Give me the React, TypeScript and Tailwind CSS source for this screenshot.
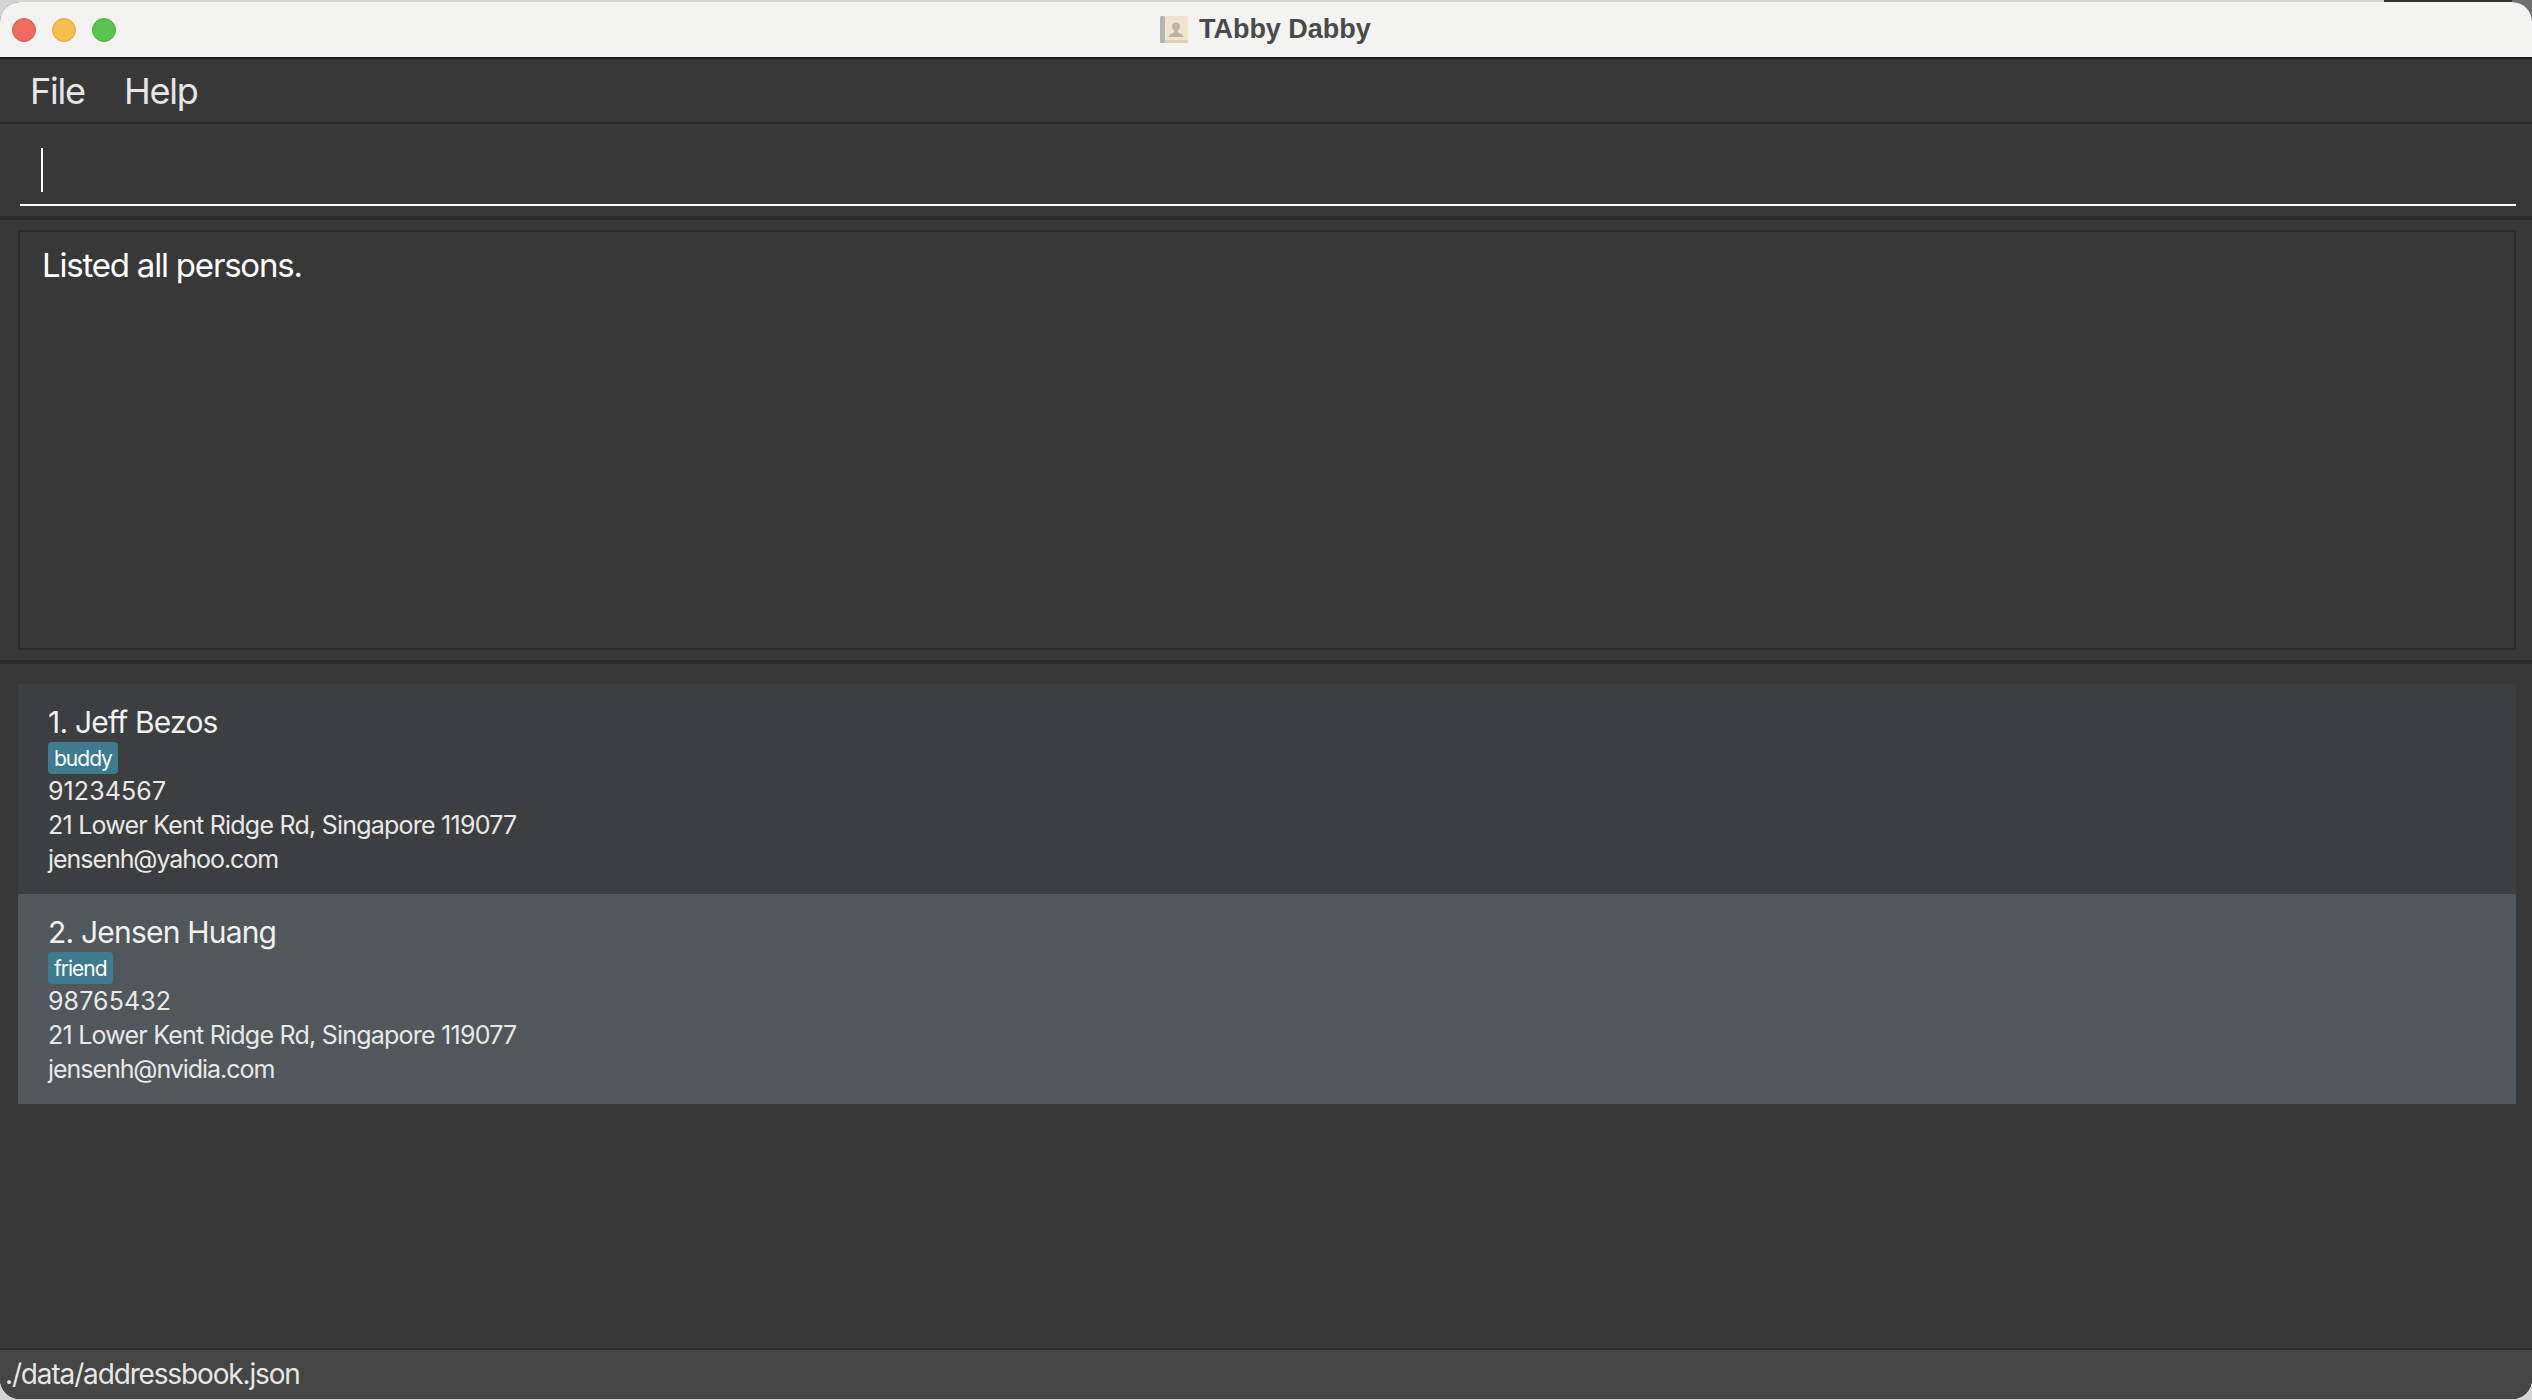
import React from "react";

const font = { fontFamily: "Inter, 'Noto Sans', sans-serif" };

function Person({ name, tag, phone, email, selected }: { name: string; tag: string; phone: string; email: string; selected?: boolean }) {
  return (
    <div className={`h-[210px] pl-[30px] pt-[15px] flex flex-col items-start text-[#e8e8e8] ${selected ? "bg-[#51575a]" : "bg-[#3d3e40]"}`}>
      <div className="text-[30px] leading-[47px] tracking-[-0.8px] h-[43px] text-[#f0f0f0]">{name}</div>
      <div className="h-[32px] px-[6px] rounded-[4px] bg-[#3e7b91] text-[21px] leading-[33px] tracking-[-1px] text-white">{tag}</div>
      <div className="text-[25px] leading-[34px] h-[34px] tracking-[0.1px]">{phone}</div>
      <div className="text-[25px] leading-[34px] h-[34px] tracking-[-0.77px]">21 Lower Kent Ridge Rd, Singapore 119077</div>
      <div className="text-[25px] leading-[34px] h-[34px] tracking-[-1.05px]">{email}</div>
    </div>
  );
}

export default function App() {
  return (
    <div className="relative w-[2532px] h-[1400px] overflow-hidden bg-[#d4d4d4]" style={font}>
      <div className="absolute right-0 top-0 w-[148px] h-[2px] bg-[#333333]" />
      <div className="absolute right-0 top-0 w-[20px] h-[20px] bg-[#707070]" />
      <div className="absolute left-0 top-0 w-full h-[1400px] pt-[2px]">
        <div className="h-[1397px] rounded-[20px] overflow-hidden flex flex-col bg-[#383838]">
          <div className="h-[57px] shrink-0 bg-[#f3f3f2] border-b-[2px] border-[#1c1c1c] flex items-center relative">
            <div className="flex gap-[16px] pl-[12px]">
              <span className="w-[24px] h-[24px] rounded-full bg-[#ee6a5f] border border-[#d9574c]" />
              <span className="w-[24px] h-[24px] rounded-full bg-[#f5bf4f] border border-[#dba73f]" />
              <span className="w-[24px] h-[24px] rounded-full bg-[#5ac451] border border-[#4cae43]" />
            </div>
            <div className="absolute left-[1160px] top-[13px] flex items-center">
              <svg width="28" height="27" viewBox="0 0 28 27">
                <rect x="0" y="0" width="28" height="27" rx="2" fill="#f0e5cc" />
                <rect x="0" y="0" width="5" height="27" rx="1.5" fill="#b4b4b4" />
                <rect x="5" y="24" width="23" height="3" fill="#dcd1b8" />
                <circle cx="16" cy="10.5" r="4" fill="#bdb5a4" />
                <path d="M14.5 13.5 L17.5 13.5 L18 16.5 L23 19 L23 21 L9 21 L9 19 L14 16.5 Z" fill="#bdb5a4" />
              </svg>
              <span className="ml-[11px] text-[27px] font-bold leading-[28px] text-[#4a4a4a] tracking-[-0.03px]" style={{ fontFamily: "'Liberation Sans', sans-serif" }}>TAbby Dabby</span>
            </div>
          </div>
          <div className="h-[65px] shrink-0 border-b-[2px] border-[#2b2b2b] flex items-center pl-[30px] gap-[39px] text-[36px] tracking-[-1.2px] text-[#e6e6e6]">
            <span>File</span>
            <span>Help</span>
          </div>
          <div className="h-[96px] shrink-0 border-b-[4px] border-[#2b2b2b] pt-[24px] pl-[20px] pr-[16px]">
            <div className="h-[58px] border-b-[2px] border-white pl-[21px]">
              <div className="w-[2px] h-[44px] bg-white" />
            </div>
          </div>
          <div className="h-[444px] shrink-0 border-b-[4px] border-[#2b2b2b] pl-[18px] pt-[10px] pr-[16px]">
            <div className="h-[420px] border-[2px] border-[#2b2b2b] pl-[22px] pt-[11px] text-[33px] leading-[44px] tracking-[-1.2px] text-white">
              Listed all persons.
            </div>
          </div>
          <div className="flex-1 pl-[18px] pr-[16px] pt-[20px]">
            <Person name="1. Jeff Bezos" tag="buddy" phone="91234567" email="jensenh@yahoo.com" />
            <Person name="2. Jensen Huang" tag="friend" phone="98765432" email="jensenh@nvidia.com" selected />
          </div>
          <div className="h-[51px] shrink-0 border-t-[2px] border-[#2b2b2b] bg-[#454545] pl-[5px] text-[28px] leading-[48px] tracking-[-1.15px] text-[#e6e6e6]">
            ./data/addressbook.json
          </div>
        </div>
      </div>
    </div>
  );
}
